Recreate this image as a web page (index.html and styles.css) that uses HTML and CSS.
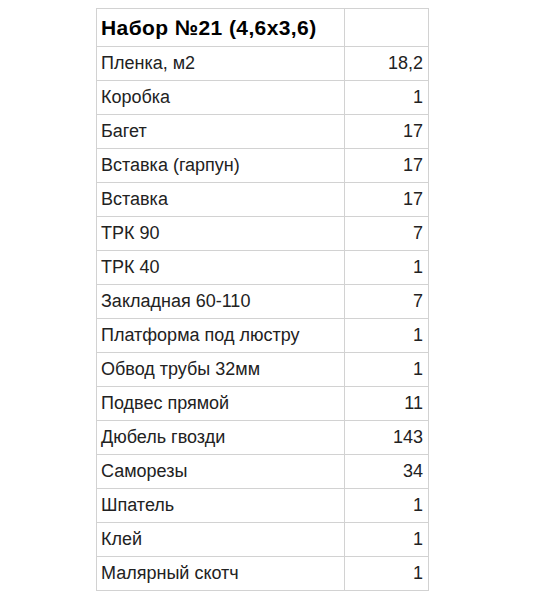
FILE: index.html
```html
<!DOCTYPE html>
<html>
<head>
<meta charset="utf-8">
<link rel="stylesheet" href="styles.css">
</head>
<body>
<div class="wrap">
<table class="sheet">
<colgroup><col class="c-name"><col class="c-qty"></colgroup>
<tr class="head"><td>Набор №21 (4,6x3,6)</td><td></td></tr>
<tr><td>Пленка, м2</td><td class="num">18,2</td></tr>
<tr><td>Коробка</td><td class="num">1</td></tr>
<tr><td>Багет</td><td class="num">17</td></tr>
<tr><td>Вставка (гарпун)</td><td class="num">17</td></tr>
<tr><td>Вставка</td><td class="num">17</td></tr>
<tr><td>ТРК 90</td><td class="num">7</td></tr>
<tr><td>ТРК 40</td><td class="num">1</td></tr>
<tr><td>Закладная 60-110</td><td class="num">7</td></tr>
<tr><td>Платформа под люстру</td><td class="num">1</td></tr>
<tr><td>Обвод трубы 32мм</td><td class="num">1</td></tr>
<tr><td>Подвес прямой</td><td class="num">11</td></tr>
<tr><td>Дюбель гвозди</td><td class="num">143</td></tr>
<tr><td>Саморезы</td><td class="num">34</td></tr>
<tr><td>Шпатель</td><td class="num">1</td></tr>
<tr><td>Клей</td><td class="num">1</td></tr>
<tr><td>Малярный скотч</td><td class="num">1</td></tr>
</table>
</div>
</body>
</html>
```
FILE: styles.css
```css
html, body {
  margin: 0;
  background: #fff;
}
.wrap {
  padding: 8px 0 0 96px;
}
.sheet {
  border-collapse: collapse;
  table-layout: fixed;
  width: 332px;
  font-family: "Liberation Sans", Arial, sans-serif;
  font-size: 18px;
  color: #222;
}
.c-name { width: 248px; }
.c-qty { width: 84px; }
.sheet td {
  border: 1px solid #d2d2d2;
  height: 34px;
  padding: 0 5px 0 4px;
  box-sizing: border-box;
  white-space: nowrap;
  vertical-align: middle;
}
.sheet tr.head td {
  height: 38px;
  font-size: 21px;
  font-weight: bold;
  letter-spacing: 0.4px;
  color: #000;
  padding-top: 1px;
}
.sheet td.num {
  text-align: right;
}
```
